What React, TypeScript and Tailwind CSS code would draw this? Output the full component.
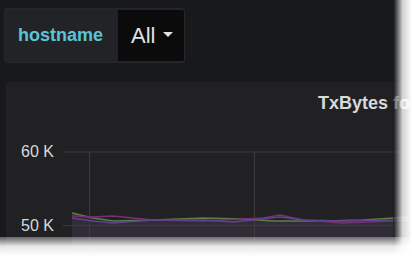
const green = "9,73 30,78 50,81 90,80 140,78 180,79 210,81 260,81 300,80 330,78 345,77";
const magenta = "9,76 30,77 50,76 90,80 140,81 200,78 217,75 240,80 280,83 330,81 345,80";
const purple = "9,78 30,81 50,83 90,80 140,80 170,82 200,79 217,77 240,80 280,81 330,80 345,79";

function Chart() {
  return (
    <svg width="345" height="110" viewBox="0 0 345 110" className="block">
      <polygon points={`9,110 ${green} 345,110`} fill="#2c2a31" />
      <polygon points="9,110 9,78 30,81 50,83 90,81 140,81 170,82 200,80 240,81 280,83 330,81 345,80 345,110" fill="#302d36" />
      <line x1="0" y1="12" x2="345" y2="12" stroke="#3b3b3e" strokeWidth="1" />
      <line x1="0" y1="85.5" x2="345" y2="85.5" stroke="#3b3b3e" strokeWidth="1" />
      <line x1="26.5" y1="12" x2="26.5" y2="110" stroke="#3b3b3e" strokeWidth="1" />
      <line x1="191.5" y1="12" x2="191.5" y2="110" stroke="#3b3b3e" strokeWidth="1" />
      <polyline points={green} fill="none" stroke="#5f7d48" strokeWidth="1.5" />
      <polyline points={magenta} fill="none" stroke="#7a2f70" strokeWidth="1.5" />
      <polyline points={purple} fill="none" stroke="#5a4690" strokeWidth="1.5" />
    </svg>
  );
}

export default function App() {
  return (
    <div className="relative w-[412px] h-[256px] overflow-hidden bg-[#18191b] font-['Liberation_Sans',Arial,sans-serif]">
      <div className="pl-[4px] pt-[8px]">
        <div className="flex h-[55px] w-[181px] rounded-[3px] border border-[#26272a] bg-[#222327]">
          <div className="flex flex-1 items-center pl-[13px] text-[18px] font-bold text-[#5bc5d6]">
            hostname
          </div>
          <div className="my-[1px] flex w-[66px] items-center rounded-r-[2px] bg-[#0b0b0c] pl-[13px] text-[22px] text-[#e2e2e3]">
            All
            <svg width="10" height="6" viewBox="0 0 10 6" className="ml-[8px] mt-[-2px]">
              <polygon points="0,0 10,0 5,5" fill="#e2e2e3" />
            </svg>
          </div>
        </div>
        <div className="ml-[2px] mt-[19px] h-[200px] w-[500px] rounded-[3px] bg-[#212124]">
          <div className="pl-[312px] pt-[11px] text-[18px] font-bold leading-[20px] text-[#d8d9da] whitespace-nowrap">
            TxBytes for All
          </div>
          <div className="mt-[27px] flex">
            <div className="flex w-[57px] flex-col items-end pr-[9px] pt-[3px] text-[16px] leading-[18px] text-[#d8d9da]">
              <span>60 K</span>
              <span className="mt-[56px]">50 K</span>
            </div>
            <Chart />
          </div>
        </div>
      </div>
      <div className="absolute right-0 top-0 h-full w-[19px] bg-gradient-to-r from-[#0d0d0e]/60 via-white/80 to-white" />
      <div className="absolute bottom-0 left-0 h-[19px] w-full bg-gradient-to-b from-white/30 via-white/90 to-white" />
    </div>
  );
}
